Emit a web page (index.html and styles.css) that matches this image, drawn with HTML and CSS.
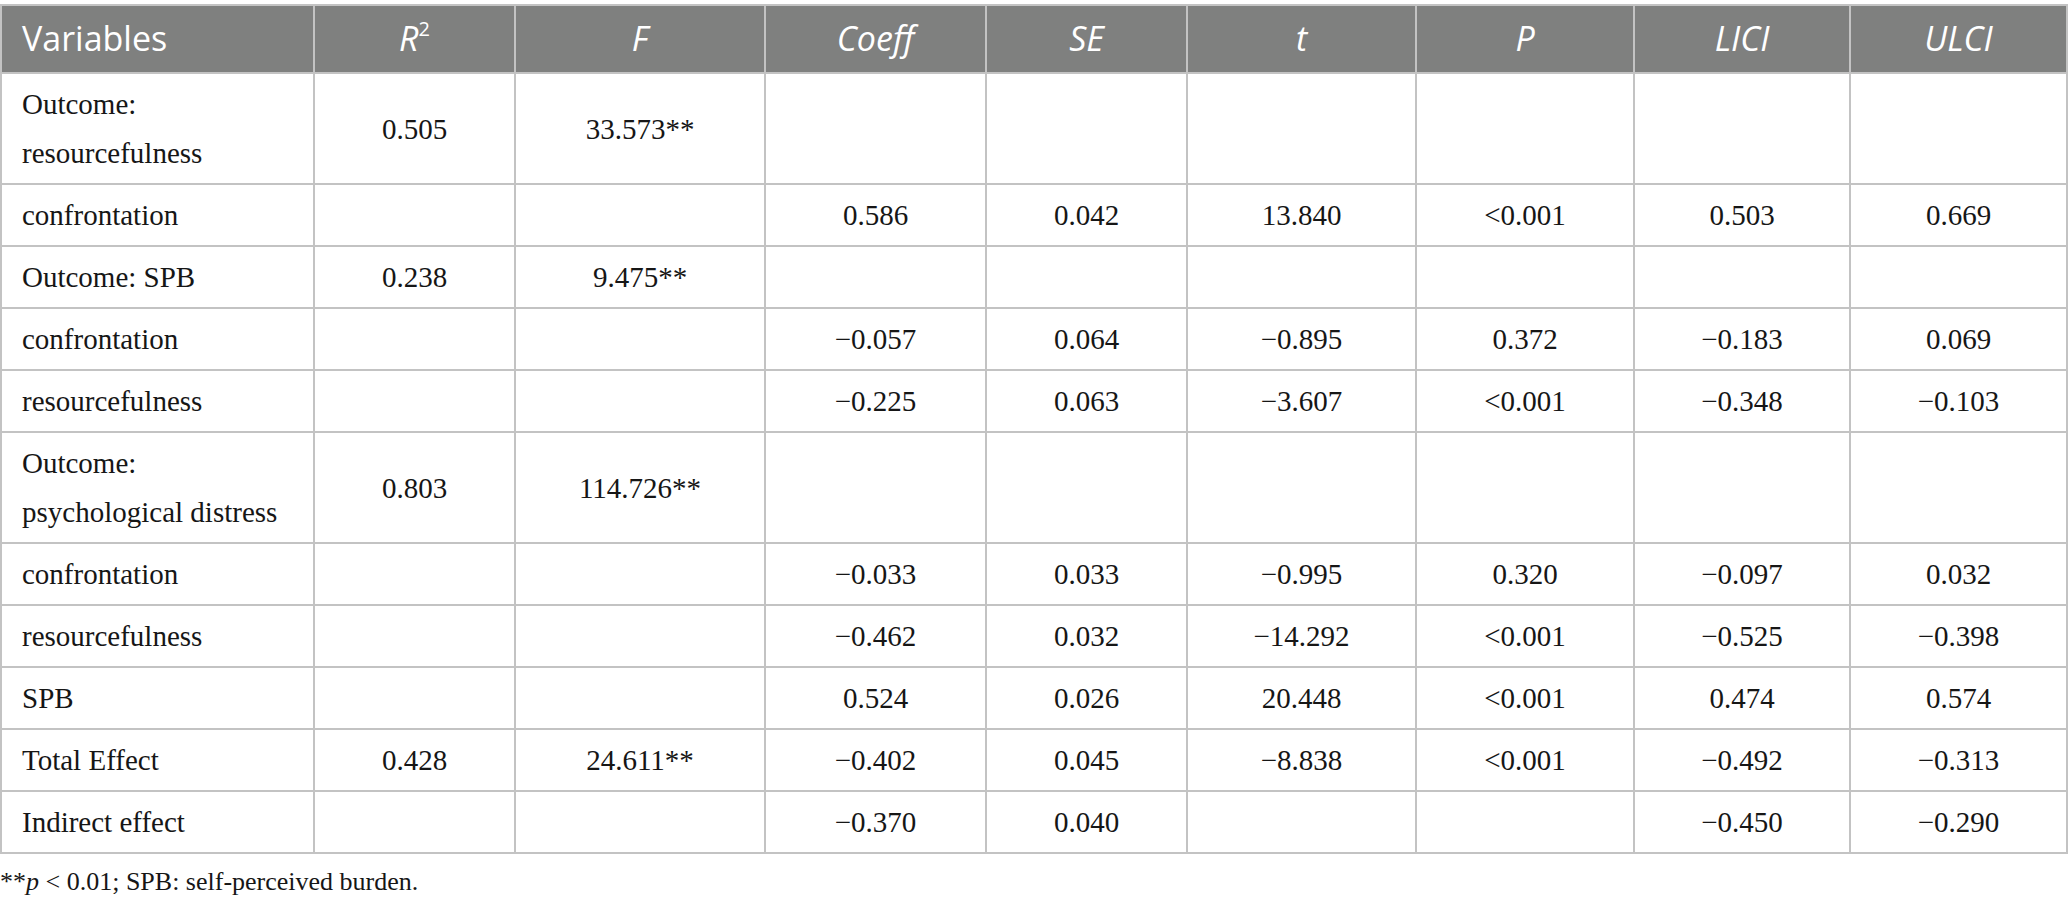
FILE: index.html
```html
<!DOCTYPE html>
<html>
<head>
  <title>Mediation analysis</title>
  <link rel="stylesheet" href="styles.css">
</head>
<body>
  <table class="results">
    <colgroup>
      <col style="width: 313px">
      <col style="width: 201px">
      <col style="width: 250px">
      <col style="width: 221px">
      <col style="width: 201px">
      <col style="width: 229px">
      <col style="width: 218px">
      <col style="width: 216px">
      <col style="width: 217px">
    </colgroup>
    <thead>
      <tr>
        <th class="left">Variables</th>
        <th><i>R</i><sup>2</sup></th>
        <th><i>F</i></th>
        <th><i>Coeff</i></th>
        <th><i>SE</i></th>
        <th><i>t</i></th>
        <th><i>P</i></th>
        <th><i>LICI</i></th>
        <th><i>ULCI</i></th>
      </tr>
    </thead>
    <tbody>
      <tr>
        <td class="left">Outcome:<br>resourcefulness</td>
        <td>0.505</td>
        <td>33.573**</td>
        <td></td><td></td><td></td><td></td><td></td><td></td>
      </tr>
      <tr>
        <td class="left">confrontation</td>
        <td></td><td></td>
        <td>0.586</td>
        <td>0.042</td>
        <td>13.840</td>
        <td>&lt;0.001</td>
        <td>0.503</td>
        <td>0.669</td>
      </tr>
      <tr>
        <td class="left">Outcome: SPB</td>
        <td>0.238</td>
        <td>9.475**</td>
        <td></td><td></td><td></td><td></td><td></td><td></td>
      </tr>
      <tr>
        <td class="left">confrontation</td>
        <td></td><td></td>
        <td>&minus;0.057</td>
        <td>0.064</td>
        <td>&minus;0.895</td>
        <td>0.372</td>
        <td>&minus;0.183</td>
        <td>0.069</td>
      </tr>
      <tr>
        <td class="left">resourcefulness</td>
        <td></td><td></td>
        <td>&minus;0.225</td>
        <td>0.063</td>
        <td>&minus;3.607</td>
        <td>&lt;0.001</td>
        <td>&minus;0.348</td>
        <td>&minus;0.103</td>
      </tr>
      <tr>
        <td class="left">Outcome:<br>psychological distress</td>
        <td>0.803</td>
        <td>114.726**</td>
        <td></td><td></td><td></td><td></td><td></td><td></td>
      </tr>
      <tr>
        <td class="left">confrontation</td>
        <td></td><td></td>
        <td>&minus;0.033</td>
        <td>0.033</td>
        <td>&minus;0.995</td>
        <td>0.320</td>
        <td>&minus;0.097</td>
        <td>0.032</td>
      </tr>
      <tr>
        <td class="left">resourcefulness</td>
        <td></td><td></td>
        <td>&minus;0.462</td>
        <td>0.032</td>
        <td>&minus;14.292</td>
        <td>&lt;0.001</td>
        <td>&minus;0.525</td>
        <td>&minus;0.398</td>
      </tr>
      <tr>
        <td class="left">SPB</td>
        <td></td><td></td>
        <td>0.524</td>
        <td>0.026</td>
        <td>20.448</td>
        <td>&lt;0.001</td>
        <td>0.474</td>
        <td>0.574</td>
      </tr>
      <tr>
        <td class="left">Total Effect</td>
        <td>0.428</td>
        <td>24.611**</td>
        <td>&minus;0.402</td>
        <td>0.045</td>
        <td>&minus;8.838</td>
        <td>&lt;0.001</td>
        <td>&minus;0.492</td>
        <td>&minus;0.313</td>
      </tr>
      <tr>
        <td class="left">Indirect effect</td>
        <td></td><td></td>
        <td>&minus;0.370</td>
        <td>0.040</td>
        <td></td><td></td>
        <td>&minus;0.450</td>
        <td>&minus;0.290</td>
      </tr>
    </tbody>
  </table>

  <p class="note">**<i>p</i> &lt; 0.01; SPB: self-perceived burden.</p>
</body>
</html>
```

FILE: styles.css
```css
body {
  margin: 0;
  padding-top: 4px;
  background-color: white;
  color: #161616;
  font-family: 'Liberation Serif', 'Times New Roman', serif;
}
.results {
  width: 2066px;
  table-layout: fixed;
  border-collapse: collapse;
}
.results th,
.results td {
  border: 2px solid #c3c3c3;
  text-align: center;
  vertical-align: middle;
}
.results th {
  background-color: #7f807f;
  color: white;
  font-family: 'Open Sans', sans-serif;
  font-weight: normal;
  font-size: 34px;
  line-height: 49px;
  padding: 8px 0 9px;
}
.results th sup {
  font-size: 20px;
  line-height: 0;
  vertical-align: 15px;
}
.results td {
  font-size: 29px;
  line-height: 49px;
  padding: 6px 0 5px;
}
.results .left {
  text-align: left;
  padding-left: 20px;
}
.note {
  margin: 10px 0 0;
  font-size: 26px;
  line-height: 36px;
}
```
